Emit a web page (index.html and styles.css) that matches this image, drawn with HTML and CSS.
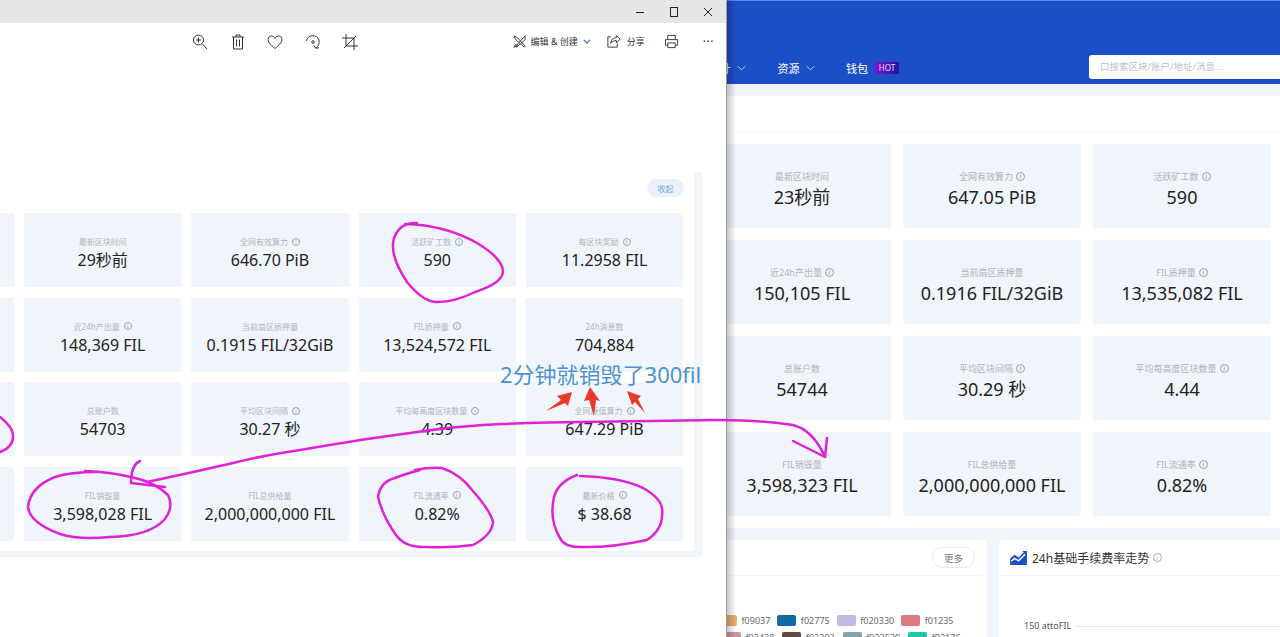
FILE: index.html
```html
<!DOCTYPE html>
<html lang="zh-CN">
<head>
    <meta charset="UTF-8">
    <meta name="viewport" content="width=device-width, initial-scale=1.0">
    <title>FIL 销毁量</title>
    <link rel="stylesheet" href="styles.css">
</head>
<body>
<div class="desktop">

    <!-- Navegador atrás -->
    <div class="browser">
        <div class="topbar">
            <ul class="nav-links">
                <li>统计<svg class="chev" viewBox="0 0 10 6"><path d="M1 1l4 4 4-4"/></svg></li>
                <li>资源<svg class="chev" viewBox="0 0 10 6"><path d="M1 1l4 4 4-4"/></svg></li>
                <li>钱包<span class="hot">HOT</span></li>
            </ul>
            <div class="search">口搜索区块/账户/地址/消息...</div>
        </div>

        <div class="stats-page">
            <div class="stats-head"></div>
            <div class="cards-big">
                <div class="card"><p class="label">最新区块时间</p><p class="value">23秒前</p></div>
                <div class="card"><p class="label">全网有效算力<span class="info">i</span></p><p class="value">647.05 PiB</p></div>
                <div class="card"><p class="label">活跃矿工数<span class="info">i</span></p><p class="value">590</p></div>
                <div class="card"><p class="label">近24h产出量<span class="info">i</span></p><p class="value">150,105 FIL</p></div>
                <div class="card"><p class="label">当前扇区质押量</p><p class="value">0.1916 FIL/32GiB</p></div>
                <div class="card"><p class="label">FIL质押量<span class="info">i</span></p><p class="value">13,535,082 FIL</p></div>
                <div class="card"><p class="label">总账户数</p><p class="value">54744</p></div>
                <div class="card"><p class="label">平均区块间隔<span class="info">i</span></p><p class="value">30.29 秒</p></div>
                <div class="card"><p class="label">平均每高度区块数量<span class="info">i</span></p><p class="value">4.44</p></div>
                <div class="card"><p class="label">FIL销毁量</p><p class="value">3,598,323 FIL</p></div>
                <div class="card"><p class="label">FIL总供给量</p><p class="value">2,000,000,000 FIL</p></div>
                <div class="card"><p class="label">FIL流通率<span class="info">i</span></p><p class="value">0.82%</p></div>
            </div>
        </div>

        <div class="panels">
            <div class="panel panel-left">
                <div class="panel-head panel-head-end"><button class="more">更多</button></div>
                <div class="legend legend-a">
                    <span class="legend-item"><i class="sw sw1"></i>f09037</span>
                    <span class="legend-item"><i class="sw sw2"></i>f02775</span>
                    <span class="legend-item"><i class="sw sw3"></i>f020330</span>
                    <span class="legend-item"><i class="sw sw4"></i>f01235</span>
                </div>
                <div class="legend legend-b">
                    <span class="legend-item"><i class="sw sw5"></i>f02438</span>
                    <span class="legend-item"><i class="sw sw6"></i>f02393</span>
                    <span class="legend-item"><i class="sw sw7"></i>f022529</span>
                    <span class="legend-item"><i class="sw sw8"></i>f02176</span>
                </div>
            </div>
            <div class="panel panel-right">
                <div class="panel-head">
                    <svg class="chart-icon" viewBox="0 0 18 16">
                        <path class="chart-fill" d="M0 9l5-4 4 3 6-6 3 2v12H0z"/>
                        <path class="chart-line" d="M1 12l4-3 4 2.500 7-7"/>
                        <path class="chart-arrow" d="M13 1h5v5z"/>
                    </svg>
                    <h3>24h基础手续费率走势</h3>
                    <span class="info info-title">i</span>
                </div>
                <div class="axis-row"><span>150 attoFIL</span><div class="axis-line"></div></div>
            </div>
        </div>
    </div>

    <!-- Janela de fotos -->
    <div class="photos">
        <div class="titlebar">
            <svg class="win-btn" viewBox="0 0 12 12"><path d="M2 6.500h8"/></svg>
            <svg class="win-btn" viewBox="0 0 12 12"><rect x="2.500" y="1.500" width="7" height="9"/></svg>
            <svg class="win-btn" viewBox="0 0 12 12"><path d="M2 2l8 8M10 2l-8 8"/></svg>
        </div>
        <div class="toolbar">
            <div class="tools">
                <svg class="tool" viewBox="0 0 18 18"><circle cx="7.500" cy="7" r="5"/><path d="M7.500 4.500v5M5 7h5M11.500 11l4.500 5"/></svg>
                <svg class="tool" viewBox="0 0 18 18"><path d="M3 4h12M7 4V2h4v2M4.500 4v12h9V4M7.500 6.500v7M10.500 6.500v7"/></svg>
                <svg class="tool" viewBox="0 0 18 18"><path d="M9 15.500C3.500 11 2 8.500 2 6.500 2 4 4 3 5.500 3S8.500 4 9 5.500C9.500 4 11 3 12.500 3S16 4 16 6.500c0 2-1.500 4.500-7 9z"/></svg>
                <svg class="tool" viewBox="0 0 18 18"><path d="M2.500 8A6.500 6.500 0 0 1 15 7c.7 3-.5 6-3 8M10 12.500l2 3 3-1"/><circle cx="9" cy="9" r="1.300"/></svg>
                <svg class="tool" viewBox="0 0 18 18"><path d="M5 1v12h12M1 5h12v12M3 15L15 3"/></svg>
            </div>
            <div class="tools-right">
                <svg class="tool tool-edit" viewBox="0 0 16 16"><path d="M2 2l4 2 8 9-1 1-9-8zM14 2l-2 2-8 9 1 1 9-8zM2 14l2-3 2 2z"/></svg>
                <span class="tool-text tool-text-edit">编辑 &amp; 创建</span>
                <svg class="chev-blue" viewBox="0 0 10 6"><path d="M1 1l4 4 4-4"/></svg>
                <svg class="tool tool-share" viewBox="0 0 16 16"><path d="M5 3H2v11h10v-4M5 10c0-4 3-6 6-6V1.500L15 5.500l-4 4V7c-3 0-5 1-6 3z"/></svg>
                <span class="tool-text tool-text-share">分享</span>
                <svg class="tool tool-print" viewBox="0 0 16 16"><path d="M4 6V1.500h8V6M4 12H1.500V6h13v6H12M4 9.500h8v5H4z"/></svg>
                <span class="dots">···</span>
            </div>
        </div>
        <div class="shot">
            <div class="shot-top"><button class="collapse">收起</button></div>
            <div class="cards-small">
                <div class="card"></div>
                <div class="card"><p class="label">最新区块时间</p><p class="value">29秒前</p></div>
                <div class="card"><p class="label">全网有效算力<span class="info">i</span></p><p class="value">646.70 PiB</p></div>
                <div class="card"><p class="label">活跃矿工数<span class="info">i</span></p><p class="value">590</p></div>
                <div class="card"><p class="label">每区块奖励<span class="info">i</span></p><p class="value">11.2958 FIL</p></div>
                <div class="card"></div>
                <div class="card"><p class="label">近24h产出量<span class="info">i</span></p><p class="value">148,369 FIL</p></div>
                <div class="card"><p class="label">当前扇区质押量</p><p class="value">0.1915 FIL/32GiB</p></div>
                <div class="card"><p class="label">FIL质押量<span class="info">i</span></p><p class="value">13,524,572 FIL</p></div>
                <div class="card"><p class="label">24h消息数</p><p class="value">704,884</p></div>
                <div class="card"></div>
                <div class="card"><p class="label">总账户数</p><p class="value">54703</p></div>
                <div class="card"><p class="label">平均区块间隔<span class="info">i</span></p><p class="value">30.27 秒</p></div>
                <div class="card"><p class="label">平均每高度区块数量<span class="info">i</span></p><p class="value">4.39</p></div>
                <div class="card"><p class="label">全网原值算力<span class="info">i</span></p><p class="value">647.29 PiB</p></div>
                <div class="card"></div>
                <div class="card"><p class="label">FIL销毁量</p><p class="value">3,598,028 FIL</p></div>
                <div class="card"><p class="label">FIL总供给量</p><p class="value">2,000,000,000 FIL</p></div>
                <div class="card"><p class="label">FIL流通率<span class="info">i</span></p><p class="value">0.82%</p></div>
                <div class="card"><p class="label">最新价格<span class="info">i</span></p><p class="value">$ 38.68</p></div>
            </div>
        </div>
    </div>

    <!-- Anotações à mão -->
    <svg class="ink" viewBox="0 0 1280 637">
        <path d="M417 223Q400 222 394 238Q389 255 407 282Q424 303 438 302Q455 302 475 292Q503 283 503 271Q502 258 477 243Q445 225 405 224"/>
        <path d="M0 417Q14 428 13 437Q13 447 0 452"/>
        <path d="M97 472Q70 472 55 477Q30 487 28 507Q30 523 60 534Q78 540 110 537Q150 536 165 519Q174 507 168 495Q155 482 131 477Q110 472 85 471"/>
        <path d="M147 482Q190 473 233 463Q265 455 300 450Q335 444 367 439Q395 435 417 432Q450 427 483 425Q540 422 583 422L717 420Q760 420 793 425Q813 430 825 457"/>
        <path d="M793 441L825 457L827 438"/>
        <path d="M140 461Q131 465 131 483L165 487"/>
        <path d="M415 470Q430 467 442 468Q460 474 472 490Q490 510 493 522Q492 535 473 545Q450 548 427 547Q405 548 396 535Q383 517 378 497Q380 482 395 478Q405 474 420 470"/>
        <path d="M577 475Q558 482 554 497Q549 520 560 538Q564 547 580 547Q610 548 647 540Q662 530 662 515Q665 500 643 488Q620 477 580 476"/>
        <polygon class="red" points="572,392 557,396 561,400 546,411 565,403 568,406"/>
        <polygon class="red" points="590,387 584,401 589,400 594,416 596,400 600,401"/>
        <polygon class="red" points="627,391 632,405 635,402 645,413 638,399 641,396"/>
    </svg>
    <div class="note">2分钟就销毁了300fil</div>

</div>
</body>
</html>
```

FILE: styles.css
```css
* {
    margin: 0;
    padding: 0;
    box-sizing: border-box;
    font-family: "Noto Sans", "Noto Sans CJK SC", sans-serif;
}

body {
    background-color: #fff;
    overflow: hidden;
}

.desktop {
    position: relative;
    width: 1280px;
    height: 637px;
    overflow: hidden;
}

/* Navegador */
.browser {
    position: absolute;
    top: 0;
    left: 0;
    width: 1280px;
    height: 637px;
    background-color: #f0f4fb;
}

.topbar {
    height: 84px;
    background-color: #1b4fc7;
    border-top: 1px solid #5f86dc;
    display: flex;
    align-items: flex-end;
    padding-bottom: 5px;
    color: white;
}

.nav-links {
    list-style: none;
    display: flex;
    align-items: center;
    height: 24px;
    padding-top: 2px;
    margin-left: 709px;
}

.nav-links li {
    display: flex;
    align-items: center;
    font-size: 11px;
    margin-right: 31.500px;
}

.chev {
    width: 9px;
    height: 6px;
    margin-left: 6px;
    fill: none;
    stroke: #c9d8f7;
    stroke-width: 1;
}

.hot {
    width: 24px;
    height: 12px;
    margin-left: 7px;
    font-size: 8px;
    line-height: 12px;
    text-align: center;
    color: #e6dcff;
    background: linear-gradient(90deg, #8a0fd0, #1a1a9c);
    border-radius: 1px;
}

.search {
    width: 191px;
    height: 24px;
    margin-left: auto;
    padding-left: 11px;
    font-size: 9.500px;
    line-height: 24px;
    color: #bcc1c9;
    background-color: white;
    border-radius: 3px 0 0 3px;
}

.stats-page {
    margin-top: 12px;
    height: 432px;
    background-color: white;
}

.stats-head {
    height: 37px;
    border-bottom: 1px solid #f8f9fb;
}

.cards-big {
    display: grid;
    grid-template-columns: repeat(3, 178px);
    grid-auto-rows: 84px;
    gap: 12px;
    margin-top: 11px;
    margin-left: 713px;
}

.card {
    display: flex;
    flex-direction: column;
    align-items: center;
    justify-content: center;
    padding-top: 8px;
    background-color: #f0f4fb;
    color: #222;
}

.label {
    display: flex;
    align-items: center;
    font-size: 9px;
    line-height: 12px;
    color: #b0b5be;
}

.value {
    margin-top: 1px;
    font-size: 18px;
    line-height: 26px;
    white-space: nowrap;
}

.info {
    width: 9px;
    height: 9px;
    margin-left: 3px;
    font-size: 6.500px;
    line-height: 7.500px;
    text-align: center;
    color: #8d929b;
    border: 1px solid #9aa0a9;
    border-radius: 50%;
}

.panels {
    display: flex;
    gap: 12px;
    margin-top: 12px;
    margin-left: 700px;
    height: 97px;
}

.panel {
    background-color: white;
    height: 97px;
    overflow: hidden;
}

.panel-left {
    width: 287px;
    border-radius: 0 4px 0 0;
}

.panel-right {
    flex: 1;
    border-radius: 4px 0 0 0;
}

.panel-head {
    height: 36px;
    display: flex;
    align-items: center;
    padding-left: 11px;
    border-bottom: 1px solid #f6f6f7;
}

.panel-head-end {
    justify-content: flex-end;
    padding-right: 12px;
}

.panel-head h3 {
    font-size: 12px;
    font-weight: 400;
    color: #333;
    margin-left: 5px;
}

.info-title {
    margin-left: 4px;
    color: #aaa;
    border-color: #aaa;
}

.more {
    width: 43px;
    height: 21px;
    font-size: 9.500px;
    color: #777;
    background-color: white;
    border: 1px solid #e8e8e8;
    border-radius: 11px;
}

.chart-icon {
    width: 17px;
    height: 15px;
}

.chart-fill {
    fill: #1b4fc7;
}

.chart-line {
    fill: none;
    stroke: white;
    stroke-width: 1.500;
}

.chart-arrow {
    fill: #1b4fc7;
}

.legend {
    display: flex;
    height: 16.500px;
    font-size: 9px;
    line-height: 11px;
    color: #666;
}

.legend-a {
    gap: 7px;
    margin-top: 39px;
    padding-left: 18px;
}

.legend-b {
    gap: 8px;
    padding-left: 22px;
}

.legend-item {
    display: flex;
    gap: 4.500px;
}

.sw {
    width: 19px;
    height: 11px;
    border-radius: 2px;
}

.sw1 { background-color: #eea96f; }
.sw2 { background-color: #0f6aa8; }
.sw3 { background-color: #c5b5e2; }
.sw4 { background-color: #dd7a80; }
.sw5 { background-color: #cf96a2; }
.sw6 { background-color: #5e4a3f; }
.sw7 { background-color: #7fa5ad; }
.sw8 { background-color: #1fc8a5; }

.axis-row {
    display: flex;
    align-items: center;
    gap: 6px;
    margin-top: 44px;
    padding-left: 25px;
    font-size: 9px;
    line-height: 12px;
    color: #555;
}

.axis-line {
    flex: 1;
    height: 1px;
    background-color: #e6e6e6;
}

/* Janela de fotos */
.photos {
    position: absolute;
    top: 0;
    left: 0;
    width: 727px;
    height: 637px;
    overflow: hidden;
    background-color: white;
    border-right: 1px solid #9c9c9c;
}

.browser::after {
    content: "";
    position: absolute;
    top: 0;
    left: 727px;
    width: 9px;
    height: 637px;
    background: linear-gradient(90deg, rgba(0, 0, 0, .22), rgba(0, 0, 0, 0));
}

.titlebar {
    height: 23px;
    background-color: #e6e6e6;
    display: flex;
    justify-content: flex-end;
    align-items: center;
    gap: 22px;
    padding-right: 12px;
}

.win-btn {
    width: 12px;
    height: 12px;
    fill: none;
    stroke: #222;
    stroke-width: 1;
}

.toolbar {
    height: 37px;
    display: flex;
    align-items: center;
}

.tools {
    display: flex;
    gap: 19.500px;
    margin-left: 191px;
}

.tool {
    width: 18px;
    height: 18px;
    fill: none;
    stroke: #333;
    stroke-width: 1;
}

.tools-right {
    display: flex;
    align-items: center;
    margin-left: auto;
    padding-right: 12px;
}

.tool-edit {
    width: 15px;
    height: 15px;
}

.tool-share {
    width: 15px;
    height: 15px;
    margin-left: 15px;
}

.tool-print {
    width: 15px;
    height: 15px;
    margin-left: 19px;
}

.tool-text {
    font-size: 9px;
    color: #333;
    white-space: nowrap;
}

.tool-text-edit {
    margin-left: 4px;
}

.tool-text-share {
    margin-left: 6px;
}

.chev-blue {
    width: 8px;
    height: 5px;
    margin-left: 5px;
    fill: none;
    stroke: #2c72b7;
    stroke-width: 1.500;
}

.dots {
    margin-left: 24px;
    font-size: 12px;
    letter-spacing: .5px;
    color: #333;
}

.shot {
    width: 702px;
    margin-top: 112px;
    padding-bottom: 10px;
    border-right: 8px solid #f2f5fc;
    border-bottom: 6px solid #f2f5fc;
}

.shot-top {
    display: flex;
    justify-content: flex-end;
    padding-top: 7px;
    padding-right: 10px;
    height: 41px;
}

.collapse {
    width: 37px;
    height: 18px;
    font-size: 8px;
    color: #7ba4d8;
    background-color: #e9f1fb;
    border: none;
    border-radius: 9px;
}

.cards-small {
    display: grid;
    grid-template-columns: repeat(5, 157.300px);
    grid-auto-rows: 74px;
    column-gap: 10px;
    row-gap: 10.500px;
    margin-left: -143.300px;
}

.cards-small .label {
    font-size: 8px;
    line-height: 11px;
}

.cards-small .value {
    font-size: 16px;
    line-height: 24px;
}

.cards-small .info {
    width: 8px;
    height: 8px;
    margin-left: 4px;
    font-size: 5.500px;
    line-height: 6.500px;
}

/* Anotações */
.ink {
    position: absolute;
    top: 0;
    left: 0;
    width: 1280px;
    height: 637px;
    fill: none;
    stroke: #e022d6;
    stroke-width: 2.500;
    stroke-linecap: round;
    stroke-linejoin: round;
}

.ink .red {
    fill: #e8392b;
    stroke: none;
}

.note {
    position: absolute;
    top: 358px;
    left: 500px;
    font-size: 22px;
    line-height: 32px;
    color: #4a92d4;
    white-space: nowrap;
}
```
